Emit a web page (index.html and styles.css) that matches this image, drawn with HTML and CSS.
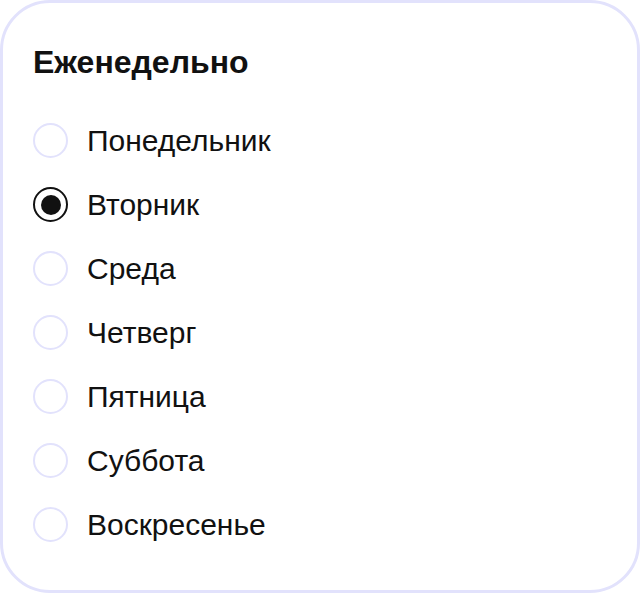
FILE: index.html
```html
<!DOCTYPE html>
<html lang="ru">
<head>
<meta charset="utf-8">
<link rel="stylesheet" href="styles.css">
</head>
<body>
<div class="card">
  <h2 class="title">Еженедельно</h2>
  <ul class="options">
    <li class="option"><span class="radio"></span><span class="label">Понедельник</span></li>
    <li class="option"><span class="radio checked"></span><span class="label">Вторник</span></li>
    <li class="option"><span class="radio"></span><span class="label">Среда</span></li>
    <li class="option"><span class="radio"></span><span class="label">Четверг</span></li>
    <li class="option"><span class="radio"></span><span class="label">Пятница</span></li>
    <li class="option"><span class="radio"></span><span class="label">Суббота</span></li>
    <li class="option"><span class="radio"></span><span class="label">Воскресенье</span></li>
  </ul>
</div>
</body>
</html>
```
FILE: styles.css
```css
html, body {
  margin: 0;
  padding: 0;
  background: #ffffff;
}
body {
  font-family: "Liberation Sans", Arial, sans-serif;
  color: #111111;
}
.card {
  box-sizing: border-box;
  width: 640px;
  height: 593px;
  border: 3px solid #e2e2fc;
  border-radius: 50px;
  background: #ffffff;
  padding: 39px 30px 0 30px;
}
.title {
  margin: 0;
  font-size: 32px;
  font-weight: 700;
  line-height: 40px;
  color: #111111;
}
.options {
  list-style: none;
  margin: 41px 0 0 0;
  padding: 0;
  display: flex;
  flex-direction: column;
  gap: 29px;
}
.option {
  display: flex;
  align-items: center;
  gap: 19px;
  height: 35px;
}
.radio {
  box-sizing: border-box;
  width: 35px;
  height: 35px;
  border-radius: 50%;
  border: 2px solid #e2e2fc;
  flex: none;
  display: flex;
  align-items: center;
  justify-content: center;
}
.radio.checked {
  border-color: #111111;
}
.radio.checked::after {
  content: "";
  width: 20px;
  height: 20px;
  border-radius: 50%;
  background: #111111;
}
.label {
  font-size: 30px;
  line-height: 35px;
  color: #111111;
}
```
